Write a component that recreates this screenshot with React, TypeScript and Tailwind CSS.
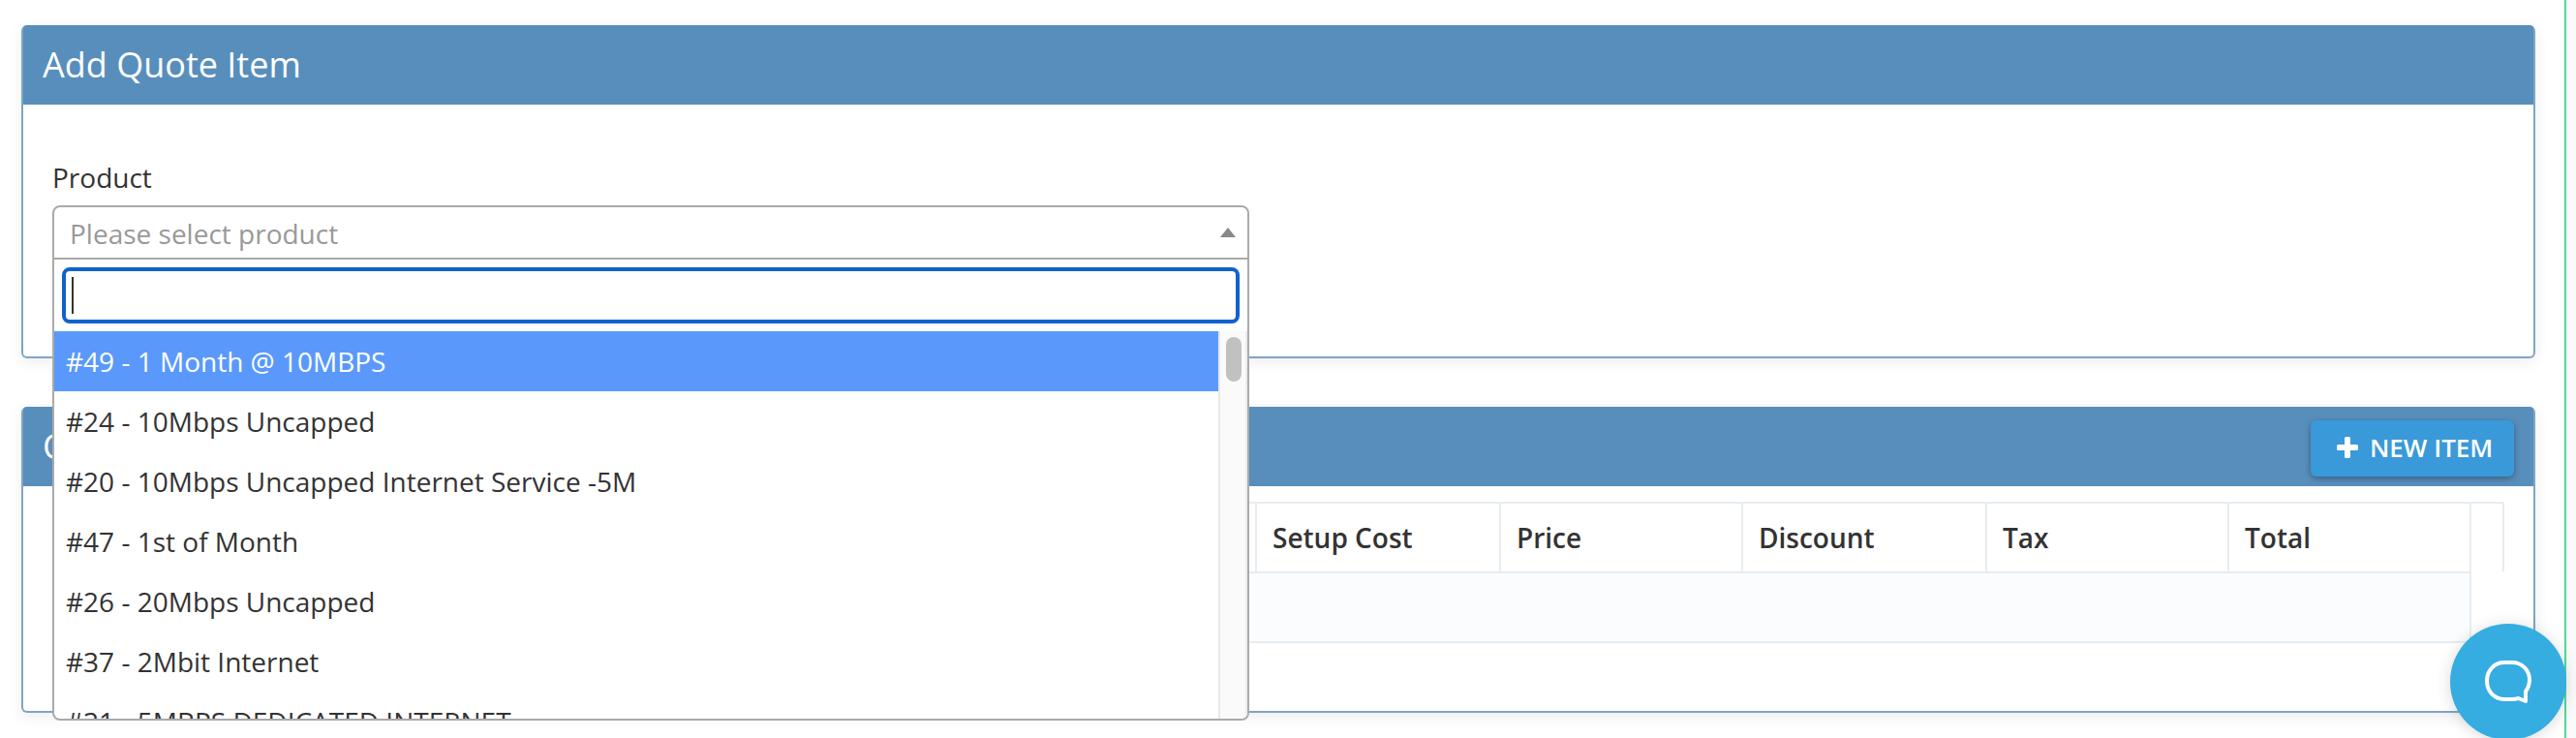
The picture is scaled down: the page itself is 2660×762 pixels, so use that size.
import { useState } from "react";

const products = [
  { id: 49, name: "1 Month @ 10MBPS" },
  { id: 24, name: "10Mbps Uncapped" },
  { id: 20, name: "10Mbps Uncapped Internet Service -5M" },
  { id: 47, name: "1st of Month" },
  { id: 26, name: "20Mbps Uncapped" },
  { id: 37, name: "2Mbit Internet" },
  { id: 31, name: "5MBPS DEDICATED INTERNET" },
];

const columns = ["", "Setup Cost", "Price", "Discount", "Tax", "Total", ""];

function ProductSelect() {
  const [active, setActive] = useState(49);

  return (
    <div className="relative w-[1236px]">
      <div className="flex h-14 items-center justify-between rounded-t-lg border-2 border-[#aaa] bg-white pr-3 pl-4">
        <span className="pt-0.5 text-[#999]">Please select product</span>
        <svg width="16" height="10" viewBox="0 0 16 10">
          <path d="M8 0l8 10H0z" fill="#888" />
        </svg>
      </div>

      {/* Dropdown */}
      <div className="absolute top-14 left-0 z-10 flex h-[476px] w-full flex-col overflow-hidden rounded-b-lg border-2 border-t-0 border-[#aaa] bg-white">
        <div className="p-2">
          <div className="flex h-[58px] items-center rounded-lg border-4 border-[#1062cd] pl-1.5">
            <span className="h-[38px] w-0.5 bg-[#333]" />
          </div>
        </div>
        <div className="flex min-h-0 flex-1">
          <ul className="flex-1 overflow-hidden">
            {products.map((p) => (
              <li
                key={p.id}
                onMouseEnter={() => setActive(p.id)}
                className={
                  p.id === active
                    ? "h-[62px] bg-[#5a99fb] px-3 leading-[62px] text-white"
                    : "h-[62px] px-3 leading-[62px]"
                }
              >
                #{p.id} - {p.name}
              </li>
            ))}
          </ul>
          <div className="w-[30px] border-r-2 border-l-2 border-r-[#ededed] border-l-[#e8e8e8] bg-[#fafafa] pt-1.5 pl-1.5">
            <div className="h-[46px] w-4 rounded-full bg-[#c1c1c1]" />
          </div>
        </div>
      </div>
    </div>
  );
}

function ItemsTable() {
  return (
    <div className="mt-4 ml-[30px] w-[2532px]">
      <div className="grid h-[74px] grid-cols-[1244px_252px_250px_252px_250px_250px_34px] border-t-2 border-[#e7ecf0]">
        {columns.map((c, i) => (
          <div
            key={i}
            className={
              i === columns.length - 1
                ? "h-[70px] border-r-2 border-[#e7ecf0]"
                : "border-r-2 border-b-2 border-[#e7ecf0] pl-4 leading-[70px] font-semibold"
            }
          >
            {c}
          </div>
        ))}
      </div>
      <div className="h-[72px] w-[2498px] border-r-2 border-b-2 border-[#e7ecf0] bg-[#fbfcfe]" />
    </div>
  );
}

export default function App() {
  return (
    <div className="h-[762px] w-[2660px] overflow-hidden bg-[#fafafa] font-['Open_Sans',sans-serif] text-[28px] text-[#333]">
      <div className="h-full w-[2650px] border-r-2 border-[#4edb9a] bg-white pt-[26px] pl-[22px]">
        <section className="h-[344px] w-[2596px] rounded-md border-2 border-t-0 border-[#7ca5ca] shadow-[0_4px_16px_rgba(0,0,0,0.07)]">
          <h2 className="h-[82px] rounded-t-sm bg-[#588ebc] pl-5 text-[36px] leading-[82px] text-white">
            Add Quote Item
          </h2>
          <div className="px-[30px] pt-[56px]">
            <label className="block h-12 leading-[38px]">Product</label>
            <ProductSelect />
          </div>
        </section>

        <section className="mt-[50px] h-[316px] w-[2596px] rounded-md border-2 border-t-0 border-[#7ca5ca] shadow-[0_4px_16px_rgba(0,0,0,0.07)]">
          <div className="flex h-[82px] items-center justify-between rounded-t-sm bg-[#588ebc] pr-5 pl-5">
            <h2 className="text-[36px] leading-[82px] text-white">Quote Items</h2>
            <button className="mb-[-4px] flex h-[58px] w-[210px] items-center rounded-md bg-[#3a99d9] pb-0.5 pl-[27px] text-[26px] font-semibold text-white shadow-[0_2px_6px_rgba(0,0,0,0.35)]">
              <svg width="22" height="22" viewBox="0 0 22 22" className="mr-3">
                <path
                  d="M9.5 0h3A1.500 1.500 0 0 1 14 1.500V8h6.500A1.500 1.500 0 0 1 22 9.500v3a1.500 1.500 0 0 1-1.500 1.500H14v6.500a1.500 1.500 0 0 1-1.500 1.500h-3A1.500 1.500 0 0 1 8 20.500V14H1.500A1.500 1.500 0 0 1 0 12.500v-3A1.500 1.500 0 0 1 1.500 8H8V1.500A1.500 1.500 0 0 1 9.500 0z"
                  fill="#fff"
                />
              </svg>
              NEW ITEM
            </button>
          </div>
          <ItemsTable />
        </section>
      </div>

      {/* Chat launcher */}
      <button className="absolute top-[644px] left-[2530px] z-20 flex h-[118px] w-[120px] items-start justify-center">
        <span className="flex h-[120px] w-[120px] shrink-0 items-center justify-center rounded-full bg-[#35ade1] shadow-[0_2px_16px_rgba(0,0,0,0.15)]">
          <svg width="48" height="44" viewBox="0 0 48 44" fill="none">
            <path
              d="M20 2h8c10 0 18 7.500 18 18 0 5.500-1.500 8.500-4 12v10l-7.500-3c-2 .700-4 1-6.500 1h-8C10 40 2 32 2 21S10 2 20 2z"
              stroke="#fff"
              strokeWidth="4"
              strokeLinejoin="round"
            />
          </svg>
        </span>
      </button>
    </div>
  );
}
